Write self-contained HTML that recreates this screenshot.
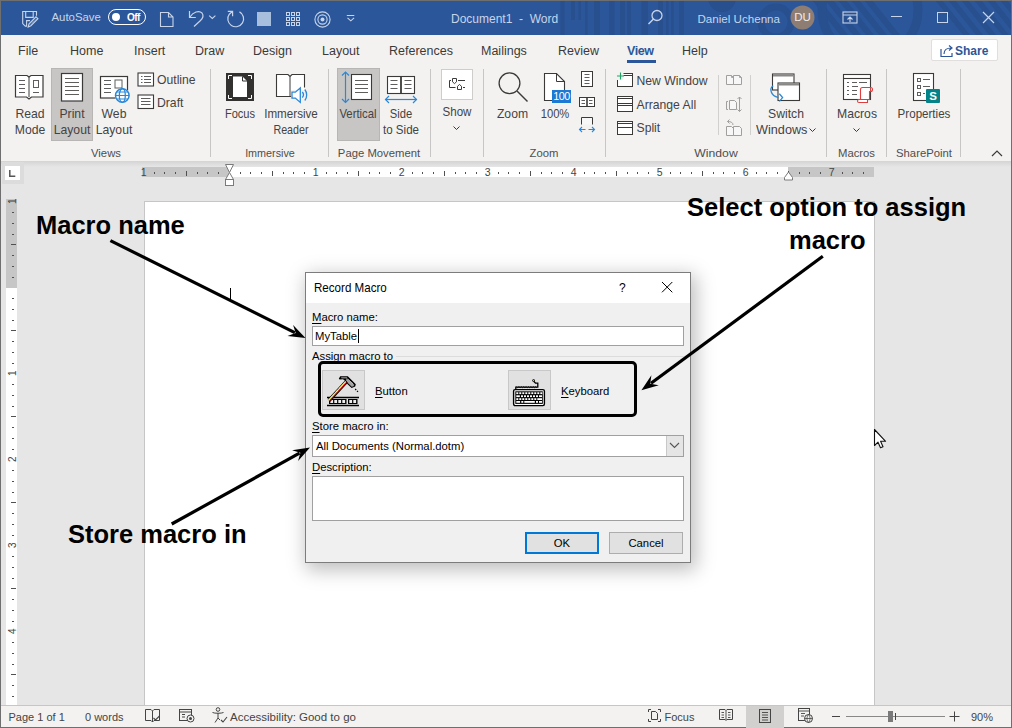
<!DOCTYPE html>
<html><head><meta charset="utf-8">
<style>
*{margin:0;padding:0;box-sizing:border-box}
html,body{width:1012px;height:728px;overflow:hidden}
body{position:relative;background:#e6e6e6;font-family:"Liberation Sans",sans-serif;color:#252423}
.a{position:absolute;overflow:visible}
.t{position:absolute;white-space:nowrap;line-height:1}
</style></head><body>
<div class="a" style="left:0px;top:0px;width:1012px;height:35px;background:#2b579a"></div>
<div class="a" style="left:0px;top:35px;width:1012px;height:126px;background:#f3f2f1"></div>
<div class="a" style="left:0px;top:161px;width:1012px;height:6px;background:linear-gradient(#d4d4d4,#e6e6e6)"></div>
<div class="a" style="left:144px;top:201px;width:731px;height:520px;background:#fff;border:1px solid #c6c6c6"></div>
<div class="a" style="left:0px;top:705px;width:1012px;height:23px;background:#f3f2f1;border-top:1px solid #c8c6c4"></div>
<svg class="a" style="left:540px;top:0px;overflow:hidden" width="472" height="35" viewBox="0 0 472 35"><g fill="#284f8e"><rect x="20.5" y="0" width="4" height="35"/><rect x="31" y="0" width="4" height="20"/><rect x="38.5" y="0" width="2.5" height="20"/><rect x="45" y="0" width="2.5" height="35"/><rect x="54" y="0" width="6" height="35"/><rect x="69" y="0" width="5.5" height="35"/><rect x="80" y="0" width="5" height="35"/><rect x="87" y="0" width="4" height="35"/><rect x="101.5" y="0" width="6.5" height="35"/><rect x="118" y="0" width="5" height="35"/><rect x="126" y="0" width="2.5" height="35"/><rect x="131" y="0" width="2.7" height="35"/><rect x="139" y="0" width="5" height="35"/><circle cx="182" cy="-2" r="14"/><circle cx="236" cy="22" r="15" fill="none" stroke="#284f8e" stroke-width="7"/><path d="M272 0h8l28 35h-8z"/><path d="M285 0h8l28 35h-8z"/><path d="M298 0h8l28 35h-8z"/><path d="M311 0h8l28 35h-8z"/><path d="M324 0h8l28 35h-8z"/><circle cx="330" cy="10" r="48" fill="none" stroke="#284f8e" stroke-width="9"/><path d="M395 0h7l28 35h-7z"/><path d="M408 0h7l28 35h-7z"/><path d="M421 0h7l28 35h-7z"/><path d="M434 0h7l28 35h-7z"/><path d="M447 0h7l28 35h-7z"/><path d="M460 0h7l28 35h-7z"/></g></svg>
<svg class="a" style="left:18px;top:6px;" width="24" height="24" viewBox="0 0 24 24"><path d="M18.5 9.8V5.5H4.7V17.6L7.3 20.1H8.6V14.6H12" fill="none" stroke="#c7d4ea" stroke-width="1.1"/>
<path d="M7.7 5.5V11.4H15.2V5.5" fill="none" stroke="#c7d4ea" stroke-width="1.1"/>
<path d="M10.2 21L11 17.8L18 10.8L19.9 12.7L12.9 19.7Z" fill="none" stroke="#c7d4ea" stroke-width="1.1"/>
<path d="M12.3 18.3L17.8 12.8" stroke="#c7d4ea" stroke-width="0.9" stroke-dasharray="1 0.8"/></svg>
<div class="t" style="left:51.5px;top:12.35px;font-size:11.4px;color:#c7d4ea;font-weight:normal;">AutoSave</div>
<div class="a" style="left:108px;top:9px;width:38px;height:16px;border:1.3px solid #fff;border-radius:8px"></div>
<svg class="a" style="left:111px;top:12px;" width="10" height="10" viewBox="0 0 10 10"><circle cx="5" cy="5" r="4" fill="#fff"/></svg>
<div class="t" style="left:127px;top:12.54px;font-size:10px;color:#fff;font-weight:bold;letter-spacing:-0.5px">Off</div>
<svg class="a" style="left:159px;top:11px;" width="16" height="17" viewBox="0 0 16 17"><path d="M1.5 1.5h8l4.5 4.5v9.5h-12.5z M9.5 1.5v4.5h4.5" fill="none" stroke="#c7d4ea" stroke-width="1.1"/></svg>
<svg class="a" style="left:180px;top:5px;" width="70" height="27" viewBox="0 0 70 27"><path d="M9.5 6V12.5H15.8M10 12C13 7 19 5 22 8C23.5 10 23 13 20.5 15.5L14 21.5" fill="none" stroke="#c7d4ea" stroke-width="1.2"/>
<path d="M29.2 10.6l3.1 2.8 3.1-2.8" fill="none" stroke="#c7d4ea" stroke-width="1.1"/>
<path d="M59.5 6.9A7.9 7.9 0 1 1 49.3 9.2L52.6 6.3M47.8 6.3H52.6V11.3" fill="none" stroke="#c7d4ea" stroke-width="1.2"/></svg>
<div class="a" style="left:257px;top:12px;width:14px;height:14px;background:#a8bedd"></div>
<svg class="a" style="left:286px;top:12px;" width="15" height="15" viewBox="0 0 15 15"><rect x="0.5" y="0.5" width="3" height="3" fill="none" stroke="#c7d4ea" stroke-width="1"/><rect x="0.5" y="5.5" width="3" height="3" fill="none" stroke="#c7d4ea" stroke-width="1"/><rect x="0.5" y="10.5" width="3" height="3" fill="none" stroke="#c7d4ea" stroke-width="1"/><rect x="5.5" y="0.5" width="3" height="3" fill="none" stroke="#c7d4ea" stroke-width="1"/><rect x="5.5" y="5.5" width="3" height="3" fill="none" stroke="#c7d4ea" stroke-width="1"/><rect x="5.5" y="10.5" width="3" height="3" fill="none" stroke="#c7d4ea" stroke-width="1"/><rect x="10.5" y="0.5" width="3" height="3" fill="none" stroke="#c7d4ea" stroke-width="1"/><rect x="10.5" y="5.5" width="3" height="3" fill="none" stroke="#c7d4ea" stroke-width="1"/><rect x="10.5" y="10.5" width="3" height="3" fill="none" stroke="#c7d4ea" stroke-width="1"/></svg>
<svg class="a" style="left:312.5px;top:9.5px;" width="19" height="19" viewBox="0 0 19 19"><circle cx="9.5" cy="9.5" r="7.6" fill="none" stroke="#c7d4ea" stroke-width="1.1"/><circle cx="9.5" cy="9.5" r="4.6" fill="none" stroke="#c7d4ea" stroke-width="1.1"/><circle cx="9.5" cy="9.5" r="2" fill="#c7d4ea"/></svg>
<svg class="a" style="left:345px;top:12px;" width="12" height="10" viewBox="0 0 12 10"><path d="M1.8 3.5H9.3" stroke="#c7d4ea" stroke-width="1"/><path d="M2.5 5.8l3.3 3 3.3-3" fill="none" stroke="#c7d4ea" stroke-width="1.1"/></svg>
<div class="t" style="left:451px;top:12.84px;font-size:12px;color:#c7d4ea;font-weight:normal;">Document1&nbsp;&nbsp;-&nbsp;&nbsp;Word</div>
<svg class="a" style="left:647px;top:9px;" width="17" height="17" viewBox="0 0 17 17"><circle cx="10" cy="6.5" r="5" fill="none" stroke="#c7d4ea" stroke-width="1.3"/><path d="M6.5 10l-5 5" stroke="#c7d4ea" stroke-width="1.5"/></svg>
<div class="t" style="left:697.5px;top:13.18px;font-size:11.6px;color:#c7d4ea;font-weight:normal;">Daniel Uchenna</div>
<svg class="a" style="left:790px;top:5px;" width="25" height="25" viewBox="0 0 25 25"><circle cx="12.5" cy="12.5" r="12" fill="#8e7d72"/></svg>
<div class="t" style="left:652.5px;width:300px;text-align:center;top:11.77px;font-size:11.5px;color:#f0ece8;font-weight:normal;">DU</div>
<svg class="a" style="left:842px;top:11px;" width="16" height="13" viewBox="0 0 16 13"><rect x="1" y="1" width="14" height="11" fill="none" stroke="#c7d4ea" stroke-width="1.1"/><path d="M1 4h14" stroke="#c7d4ea" stroke-width="1"/><path d="M8 11V6M5.5 8.5L8 6l2.5 2.5" fill="none" stroke="#c7d4ea" stroke-width="1.1"/></svg>
<div class="a" style="left:891px;top:16px;width:11px;height:1px;background:#c7d4ea"></div>
<div class="a" style="left:937px;top:12px;width:11px;height:11px;border:1.1px solid #c7d4ea"></div>
<svg class="a" style="left:982px;top:11px;" width="13" height="13" viewBox="0 0 13 13"><path d="M1 1l11 11M12 1L1 12" stroke="#c7d4ea" stroke-width="1.2"/></svg>
<div class="t" style="left:18px;top:45.42px;font-size:12.5px;color:#3b3a39;font-weight:normal;">File</div>
<div class="t" style="left:70px;top:45.42px;font-size:12.5px;color:#3b3a39;font-weight:normal;">Home</div>
<div class="t" style="left:134px;top:45.42px;font-size:12.5px;color:#3b3a39;font-weight:normal;">Insert</div>
<div class="t" style="left:195px;top:45.42px;font-size:12.5px;color:#3b3a39;font-weight:normal;">Draw</div>
<div class="t" style="left:253px;top:45.42px;font-size:12.5px;color:#3b3a39;font-weight:normal;">Design</div>
<div class="t" style="left:322px;top:45.42px;font-size:12.5px;color:#3b3a39;font-weight:normal;">Layout</div>
<div class="t" style="left:389px;top:45.42px;font-size:12.5px;color:#3b3a39;font-weight:normal;">References</div>
<div class="t" style="left:481px;top:45.42px;font-size:12.5px;color:#3b3a39;font-weight:normal;">Mailings</div>
<div class="t" style="left:558px;top:45.42px;font-size:12.5px;color:#3b3a39;font-weight:normal;">Review</div>
<div class="t" style="left:682px;top:45.42px;font-size:12.5px;color:#3b3a39;font-weight:normal;">Help</div>
<div class="t" style="left:627px;top:45.42px;font-size:12.5px;color:#2b579a;font-weight:bold;letter-spacing:-0.4px">View</div>
<div class="a" style="left:627px;top:60px;width:29px;height:3px;background:#2b579a"></div>
<div class="a" style="left:931px;top:39px;width:67px;height:22px;background:#fff;border:1px solid #e1dfdd;border-radius:2px"></div>
<svg class="a" style="left:939px;top:43px;" width="16" height="15" viewBox="0 0 16 15"><path d="M2 6v7.5h11V10" fill="none" stroke="#2b579a" stroke-width="1.2"/><path d="M5 11c0-4 3-6 7-6M10 2.5l3 2.5-3 2.5" fill="none" stroke="#2b579a" stroke-width="1.2"/></svg>
<div class="t" style="left:955px;top:45.34px;font-size:12px;color:#2b579a;font-weight:bold;">Share</div>
<div class="a" style="left:0px;top:0px;width:1012px;height:1px;background:#6f6f6f"></div>
<div class="a" style="left:0px;top:0px;width:1px;height:728px;background:#6f6f6f"></div>
<div class="a" style="left:1011px;top:0px;width:1px;height:728px;background:#6f6f6f"></div>
<div class="a" style="left:0px;top:727px;width:1012px;height:1px;background:#6f6f6f"></div>
<div class="a" style="left:51px;top:68px;width:42px;height:73px;background:#c8c6c4;border:1px solid #b8b6b4"></div>
<div class="a" style="left:337px;top:68px;width:43px;height:73px;background:#c8c6c4;border:1px solid #b8b6b4"></div>
<div class="a" style="left:210px;top:69px;width:1px;height:88px;background:#c8c6c4"></div>
<div class="a" style="left:328px;top:69px;width:1px;height:88px;background:#c8c6c4"></div>
<div class="a" style="left:430px;top:69px;width:1px;height:88px;background:#c8c6c4"></div>
<div class="a" style="left:483px;top:69px;width:1px;height:88px;background:#c8c6c4"></div>
<div class="a" style="left:605px;top:69px;width:1px;height:88px;background:#c8c6c4"></div>
<div class="a" style="left:826px;top:69px;width:1px;height:88px;background:#c8c6c4"></div>
<div class="a" style="left:886px;top:69px;width:1px;height:88px;background:#c8c6c4"></div>
<div class="a" style="left:960px;top:69px;width:1px;height:88px;background:#c8c6c4"></div>
<div class="a" style="left:718px;top:75px;width:1px;height:60px;background:#d2d0ce"></div>
<div class="a" style="left:750px;top:75px;width:1px;height:60px;background:#d2d0ce"></div>
<svg class="a" style="left:14px;top:74px;" width="32" height="27" viewBox="0 0 32 27"><path d="M1.5 1.5h11.5l2 1.5 2-1.5h12v21.5h-11.5l-2.5 2-2.5-2h-11z" fill="#fff" stroke="#3b3a39" stroke-width="1.2"/>
<path d="M15 3v20" stroke="#3b3a39" stroke-width="1"/>
<path d="M5 6.5h6M5 10.5h6M5 14.5h6M5 18.5h6M19 18.5h6" stroke="#5f5e5d" stroke-width="1"/>
<rect x="19.5" y="6.5" width="5" height="7" fill="none" stroke="#5f5e5d" stroke-width="1"/></svg>
<div class="t" style="left:-120px;width:300px;text-align:center;top:107.67px;font-size:12.2px;color:#444342;font-weight:normal;">Read</div>
<div class="t" style="left:-120px;width:300px;text-align:center;top:123.67px;font-size:12.2px;color:#444342;font-weight:normal;">Mode</div>
<svg class="a" style="left:60px;top:72px;" width="24" height="30" viewBox="0 0 24 30"><rect x="1.5" y="1.5" width="21" height="27.5" fill="#fff" stroke="#3b3a39" stroke-width="1.2"/>
<path d="M5 6.5h14M5 10.5h14M5 14.5h14M5 18.5h14M5 22.5h14" stroke="#5f5e5d" stroke-width="1"/></svg>
<div class="t" style="left:-78px;width:300px;text-align:center;top:107.67px;font-size:12.2px;color:#444342;font-weight:normal;">Print</div>
<div class="t" style="left:-78px;width:300px;text-align:center;top:123.67px;font-size:12.2px;color:#444342;font-weight:normal;">Layout</div>
<svg class="a" style="left:99px;top:75px;" width="33" height="30" viewBox="0 0 33 30"><rect x="1.5" y="1.5" width="27" height="21.5" fill="#fff" stroke="#3b3a39" stroke-width="1.2"/>
<path d="M5 5.5h7M5 9.5h7M5 13.5h7M5 17.5h7" stroke="#5f5e5d" stroke-width="1"/>
<rect x="16" y="5" width="7" height="8" fill="none" stroke="#5f5e5d" stroke-width="1"/>
<circle cx="23.3" cy="20.5" r="7.5" fill="#fff"/>
<circle cx="23.3" cy="20.5" r="6.8" fill="none" stroke="#2b88d8" stroke-width="1.5"/>
<ellipse cx="23.3" cy="20.5" rx="3" ry="6.8" fill="none" stroke="#2b88d8" stroke-width="1.3"/>
<path d="M16.5 20.5h13.6M17.5 17h11.6M17.5 24h11.6" stroke="#2b88d8" stroke-width="1.2"/></svg>
<div class="t" style="left:-36px;width:300px;text-align:center;top:107.67px;font-size:12.2px;color:#444342;font-weight:normal;">Web</div>
<div class="t" style="left:-36px;width:300px;text-align:center;top:123.67px;font-size:12.2px;color:#444342;font-weight:normal;">Layout</div>
<svg class="a" style="left:137px;top:72px;" width="18" height="15" viewBox="0 0 18 15"><rect x="1" y="1" width="15.5" height="13" fill="#fff" stroke="#3b3a39" stroke-width="1.1"/>
<path d="M4 4.5h1.5M4 7.5h1.5M4 10.5h1.5M7 4.5h7M7 7.5h7M7 10.5h7" stroke="#5f5e5d" stroke-width="1"/></svg>
<div class="t" style="left:157px;top:74.17px;font-size:12.2px;color:#444342;font-weight:normal;">Outline</div>
<svg class="a" style="left:137px;top:94px;" width="18" height="16" viewBox="0 0 18 16"><rect x="1" y="1" width="15.5" height="13.5" fill="#fff" stroke="#3b3a39" stroke-width="1.1"/>
<path d="M4 4.5h9.5M4 7.5h9.5M4 10.5h9.5" stroke="#5f5e5d" stroke-width="1"/></svg>
<div class="t" style="left:157px;top:96.67px;font-size:12.2px;color:#444342;font-weight:normal;">Draft</div>
<div class="t" style="left:-44px;width:300px;text-align:center;top:147.93px;font-size:11.3px;color:#4f4e4d;font-weight:normal;">Views</div>
<svg class="a" style="left:225px;top:72px;" width="31" height="30" viewBox="0 0 31 30"><rect x="1" y="1" width="28" height="28" fill="#323130"/>
<path d="M8 4.5h9.5l4.5 4.5v16h-14z" fill="#fff"/>
<path d="M17.5 4.5v4.5h4.5" fill="none" stroke="#323130" stroke-width="1"/>
<path d="M3.5 7v-3.5h3.5M23 3.5h3.5v3.5M26.5 23v3.5h-3.5M7 26.5h-3.5v-3.5" fill="none" stroke="#fff" stroke-width="1"/></svg>
<div class="t" style="left:89.5px;width:300px;text-align:center;top:107.67px;font-size:12.2px;color:#444342;font-weight:normal;transform:scaleX(0.91);transform-origin:center top;">Focus</div>
<svg class="a" style="left:275px;top:72px;" width="34" height="32" viewBox="0 0 34 32"><path d="M1.5 2.5H13L15 4.5L17 2.5H29.5V18H16V24.5H1.5Z" fill="#fff"/>
<path d="M16 24.5H1.5V2.5H13L15 4.5L17 2.5H29.5V15.5" fill="none" stroke="#3b3a39" stroke-width="1.1"/>
<path d="M15 4.5V24" stroke="#3b3a39" stroke-width="1"/>
<path d="M17 20.2h3.3l5-4.3v14.5l-5-4.3h-3.3z" fill="#fff" stroke="#2b88d8" stroke-width="1.3"/>
<path d="M27.3 20c1.3 1.5 1.3 4 0 5.5M29.8 17.5c2.5 3 2.5 8 0 11" fill="none" stroke="#2b88d8" stroke-width="1.3"/></svg>
<div class="t" style="left:140.7px;width:300px;text-align:center;top:107.67px;font-size:12.2px;color:#444342;font-weight:normal;transform:scaleX(0.955);transform-origin:center top;">Immersive</div>
<div class="t" style="left:141px;width:300px;text-align:center;top:123.67px;font-size:12.2px;color:#444342;font-weight:normal;transform:scaleX(0.88);transform-origin:center top;">Reader</div>
<div class="t" style="left:120.19999999999999px;width:300px;text-align:center;top:147.93px;font-size:11.3px;color:#4f4e4d;font-weight:normal;transform:scaleX(0.955);transform-origin:center top;">Immersive</div>
<svg class="a" style="left:340px;top:71px;" width="34" height="33" viewBox="0 0 34 33"><rect x="11.5" y="3.5" width="20" height="25" fill="#fff" stroke="#3b3a39" stroke-width="1.1"/>
<path d="M15 9.5h13M15 13.5h13M15 17.5h13M15 21.5h13" stroke="#5f5e5d" stroke-width="1"/>
<path d="M5.5 1v30.5" stroke="#2b88d8" stroke-width="1.2"/><path d="M2 4.5l3.5-3.5 3.5 3.5M2 28l3.5 3.5 3.5-3.5" fill="none" stroke="#2b88d8" stroke-width="1.2"/></svg>
<div class="t" style="left:208px;width:300px;text-align:center;top:107.67px;font-size:12.2px;color:#444342;font-weight:normal;transform:scaleX(0.93);transform-origin:center top;">Vertical</div>
<svg class="a" style="left:384px;top:73px;" width="36" height="32" viewBox="0 0 36 32"><rect x="3.5" y="3.5" width="27" height="17" fill="#fff" stroke="#3b3a39" stroke-width="1.1"/>
<path d="M17 3.5V20.5" stroke="#3b3a39" stroke-width="1.8"/>
<path d="M6.5 7.5h7M6.5 11.5h7M6.5 15.5h7M20.5 7.5h7M20.5 11.5h7M20.5 15.5h7" stroke="#5f5e5d" stroke-width="1"/>
<path d="M1.5 26.5h31" stroke="#2b88d8" stroke-width="1.2"/><path d="M5 23l-3.5 3.5 3.5 3.5M29 23l3.5 3.5-3.5 3.5" fill="none" stroke="#2b88d8" stroke-width="1.2"/></svg>
<div class="t" style="left:251px;width:300px;text-align:center;top:107.67px;font-size:12.2px;color:#444342;font-weight:normal;transform:scaleX(0.92);transform-origin:center top;">Side</div>
<div class="t" style="left:251px;width:300px;text-align:center;top:123.67px;font-size:12.2px;color:#444342;font-weight:normal;transform:scaleX(0.95);transform-origin:center top;">to Side</div>
<div class="t" style="left:229px;width:300px;text-align:center;top:147.93px;font-size:11.3px;color:#4f4e4d;font-weight:normal;">Page Movement</div>
<div class="a" style="left:441px;top:69px;width:32px;height:31px;background:#fff;border:1px solid #cfcdcb"></div>
<svg class="a" style="left:441px;top:69px;" width="32" height="31" viewBox="0 0 32 31"><path d="M10 11.5H8.5V18.5H14.5" fill="none" stroke="#3b3a39" stroke-width="1"/>
<path d="M11.5 9.5H15.5V12.8L13.5 14.6L11.5 12.8Z" fill="none" stroke="#3b3a39" stroke-width="1"/>
<path d="M17 11.5H24M22 18.5H24" stroke="#3b3a39" stroke-width="1"/>
<path d="M16.5 20.5V17.3L18.5 15.5L20.5 17.3V20.5Z" fill="none" stroke="#3b3a39" stroke-width="1"/></svg>
<div class="t" style="left:306.5px;width:300px;text-align:center;top:106.17px;font-size:12.2px;color:#444342;font-weight:normal;transform:scaleX(0.95);transform-origin:center top;">Show</div>
<svg class="a" style="left:452px;top:124.5px;" width="10" height="7" viewBox="0 0 10 7"><path d="M1.5 1.5l3 3 3-3" fill="none" stroke="#3b3a39" stroke-width="1"/></svg>
<svg class="a" style="left:496px;top:72px;" width="34" height="32" viewBox="0 0 34 32"><circle cx="13.5" cy="11.3" r="10.4" fill="none" stroke="#3b3a39" stroke-width="1.3"/>
<path d="M21 19l10.5 10.5" stroke="#3b3a39" stroke-width="1.4"/></svg>
<div class="t" style="left:362.5px;width:300px;text-align:center;top:107.67px;font-size:12.2px;color:#444342;font-weight:normal;">Zoom</div>
<svg class="a" style="left:542px;top:72px;" width="32" height="32" viewBox="0 0 32 32"><path d="M2.5 1.5H14.5L22.5 9.5V28.5H2.5Z" fill="#fff" stroke="#3b3a39" stroke-width="1.1"/>
<path d="M14.5 1.5V9.5H22.5" fill="none" stroke="#3b3a39" stroke-width="1"/>
<rect x="10" y="18" width="19" height="13" fill="#1c7ad4"/></svg>
<div class="t" style="left:553.3px;top:91.46px;font-size:10.8px;color:#fff;font-weight:normal;letter-spacing:-0.5px">100</div>
<div class="t" style="left:405.29999999999995px;width:300px;text-align:center;top:107.67px;font-size:12.2px;color:#444342;font-weight:normal;transform:scaleX(0.92);transform-origin:center top;">100%</div>
<svg class="a" style="left:579px;top:70px;" width="16" height="18" viewBox="0 0 16 18"><rect x="2.5" y="1.5" width="11" height="15" fill="#fff" stroke="#3b3a39" stroke-width="1"/>
<path d="M5.5 4.5h5M5.5 7.5h5M5.5 10.5h5M5.5 13.5h5" stroke="#5f5e5d" stroke-width="1"/></svg>
<svg class="a" style="left:578px;top:95px;" width="18" height="13" viewBox="0 0 18 13"><rect x="1.5" y="2.5" width="15" height="9" fill="#fff" stroke="#3b3a39" stroke-width="1"/>
<path d="M9 2.5V11.5" stroke="#3b3a39" stroke-width="1.6"/>
<path d="M3.5 5.5h3.5M3.5 8.5h3.5M11 5.5h3.5M11 8.5h3.5" stroke="#5f5e5d" stroke-width="1"/></svg>
<svg class="a" style="left:578px;top:115px;" width="18" height="19" viewBox="0 0 18 19"><path d="M3.5 9.5V2.5H14.5V9.5" fill="#f7f7f7" stroke="#3b3a39" stroke-width="1"/>
<path d="M1.5 14.5H7.5M4 12L1.5 14.5L4 17M10.5 14.5H16.5M14 12L16.5 14.5L14 17" fill="none" stroke="#2b88d8" stroke-width="1.1"/></svg>
<div class="t" style="left:394px;width:300px;text-align:center;top:147.93px;font-size:11.3px;color:#4f4e4d;font-weight:normal;">Zoom</div>
<svg class="a" style="left:615px;top:72px;" width="20" height="16" viewBox="0 0 20 16"><rect x="2.5" y="1.5" width="15" height="13" fill="#fff" stroke="#3b3a39" stroke-width="1"/>
<path d="M2.5 3.5h15" stroke="#3b3a39" stroke-width="1"/>
<rect x="0" y="0" width="8.5" height="8" fill="#f3f2f1"/>
<path d="M5.5 0.5v7M2 4h7" stroke="#21a366" stroke-width="1.1"/></svg>
<div class="t" style="left:636.5px;top:74.67px;font-size:12.2px;color:#444342;font-weight:normal;">New Window</div>
<svg class="a" style="left:616px;top:95px;" width="18" height="18" viewBox="0 0 18 18"><rect x="1.5" y="1.5" width="15" height="15" fill="#fff" stroke="#3b3a39" stroke-width="1"/>
<path d="M1.5 3.5h15M1.5 8.5h15M1.5 10.5h15" stroke="#3b3a39" stroke-width="1"/></svg>
<div class="t" style="left:636.5px;top:98.67px;font-size:12.2px;color:#444342;font-weight:normal;">Arrange All</div>
<svg class="a" style="left:616px;top:119px;" width="18" height="17" viewBox="0 0 18 17"><rect x="1.5" y="2.5" width="15" height="13" fill="#fff" stroke="#3b3a39" stroke-width="1"/>
<path d="M1.5 4.5h15M1.5 8.5h15" stroke="#3b3a39" stroke-width="1"/></svg>
<div class="t" style="left:636.5px;top:122.37px;font-size:12.2px;color:#444342;font-weight:normal;">Split</div>
<svg class="a" style="left:724px;top:73px;" width="20" height="14" viewBox="0 0 20 14"><path d="M2.5 11.5V2.5H7.5L9.5 4.5V11.5Z M9.5 11.5V2.5H15.5L17.5 4.5V11.5Z" fill="#f7f7f7" stroke="#a19f9d" stroke-width="1"/><path d="M7.5 2.5V4.5H9.5M15.5 2.5V4.5H17.5" fill="none" stroke="#a19f9d" stroke-width="0.9"/></svg>
<svg class="a" style="left:724px;top:95px;" width="20" height="18" viewBox="0 0 20 18"><path d="M4 6.5H2.5V14.5H4" fill="none" stroke="#a19f9d" stroke-width="1"/><path d="M5.5 14.5V5.5H10.5L12.5 7.5V14.5Z" fill="#f7f7f7" stroke="#a19f9d" stroke-width="1"/><path d="M15.5 2V16.5M13.5 4L15.5 2L17.5 4M13.5 14.5L15.5 16.5L17.5 14.5" fill="none" stroke="#a19f9d" stroke-width="1"/></svg>
<svg class="a" style="left:724px;top:118px;" width="20" height="19" viewBox="0 0 20 19"><path d="M2.5 17.5V8.5H7.5L9.5 10.5V17.5Z M9.5 17.5V8.5H15.5L17.5 10.5V17.5Z" fill="#f7f7f7" stroke="#a19f9d" stroke-width="1"/><path d="M9 7C9 4.5 7 3.5 3.5 3.5M5.5 1.5L3.5 3.5L5.5 5.5" fill="none" stroke="#a19f9d" stroke-width="1"/></svg>
<svg class="a" style="left:768px;top:72px;" width="36" height="33" viewBox="0 0 36 33"><rect x="4.5" y="2" width="21.5" height="16" fill="#fff" stroke="#3b3a39" stroke-width="1.1"/>
<rect x="5" y="2.5" width="20.5" height="2" fill="#8a8886"/>
<rect x="10" y="11" width="21.5" height="17.5" fill="#fff" stroke="#3b3a39" stroke-width="1.1"/>
<rect x="10.5" y="11.5" width="20.5" height="2" fill="#8a8886"/>
<path d="M5.2 13.8C1.5 16 1.8 23.5 10.5 25.6" fill="none" stroke="#2b88d8" stroke-width="1.3"/><path d="M11.3 21.8l3.3 3.8-3.3 3.8" fill="none" stroke="#2b88d8" stroke-width="1.3"/></svg>
<div class="t" style="left:636px;width:300px;text-align:center;top:107.67px;font-size:12.2px;color:#444342;font-weight:normal;">Switch</div>
<div class="t" style="left:756px;top:123.67px;font-size:12.2px;color:#444342;font-weight:normal;transform:scaleX(1.04);transform-origin:left top;">Windows</div>
<svg class="a" style="left:808px;top:127px;" width="9" height="6" viewBox="0 0 9 6"><path d="M1.5 1.5l3 3 3-3" fill="none" stroke="#3b3a39" stroke-width="1"/></svg>
<div class="t" style="left:566px;width:300px;text-align:center;top:147.93px;font-size:11.3px;color:#4f4e4d;font-weight:normal;transform:scaleX(1.08);transform-origin:center top;">Window</div>
<svg class="a" style="left:842px;top:72px;" width="33" height="33" viewBox="0 0 33 33"><rect x="1.5" y="2.5" width="27" height="25" fill="#fff" stroke="#3b3a39" stroke-width="1.1"/>
<path d="M1.5 6.5h27" stroke="#3b3a39" stroke-width="1.1"/>
<path d="M5 10.5h2M10 10.5h5M17 10.5h8M5 14.5h2M10 14.5h6M5 18.5h2M10 18.5h5M5 22.5h2M10 22.5h5" stroke="#5f5e5d" stroke-width="1"/>
<path d="M18.5 27.5V17.5Q18.5 15.5 20.5 15.5H28.5Q30.5 15.5 30.5 17.5Q30.5 19.5 28.5 19.5H27.5V27.5Z" fill="#fff" stroke="#e03e3e" stroke-width="1.1"/>
<path d="M28.5 15.5V19.5" stroke="#e03e3e" stroke-width="1"/>
<path d="M15.5 29Q15.5 27.5 17 27.5H25.5V30.5H17Q15.5 30.5 15.5 29Z" fill="#fff" stroke="#e03e3e" stroke-width="1.1"/></svg>
<div class="t" style="left:707px;width:300px;text-align:center;top:107.67px;font-size:12.2px;color:#444342;font-weight:normal;">Macros</div>
<svg class="a" style="left:852px;top:126.5px;" width="10" height="7" viewBox="0 0 10 7"><path d="M1.5 1.5l3 3 3-3" fill="none" stroke="#3b3a39" stroke-width="1"/></svg>
<div class="t" style="left:706.5px;width:300px;text-align:center;top:147.93px;font-size:11.3px;color:#4f4e4d;font-weight:normal;">Macros</div>
<svg class="a" style="left:911px;top:72px;" width="32" height="32" viewBox="0 0 32 32"><rect x="2.5" y="1.5" width="20" height="27" fill="#fff" stroke="#3b3a39" stroke-width="1.1"/>
<rect x="6.5" y="6.5" width="3" height="3" fill="none" stroke="#5f5e5d" stroke-width="1"/><path d="M12 7.5h7" stroke="#5f5e5d" stroke-width="1"/>
<rect x="6.5" y="13.5" width="3" height="3" fill="none" stroke="#5f5e5d" stroke-width="1"/><path d="M12 14.5h7" stroke="#5f5e5d" stroke-width="1"/>
<rect x="6.5" y="20.5" width="3" height="3" fill="none" stroke="#5f5e5d" stroke-width="1"/><path d="M12 21.5h2" stroke="#5f5e5d" stroke-width="1"/>
<rect x="15" y="17" width="14" height="14" rx="1" fill="#038387"/>
<text x="22" y="28.2" font-family="Liberation Sans" font-weight="bold" font-size="11.5" fill="#fff" text-anchor="middle">S</text></svg>
<div class="t" style="left:773.5px;width:300px;text-align:center;top:107.67px;font-size:12.2px;color:#444342;font-weight:normal;transform:scaleX(0.95);transform-origin:center top;">Properties</div>
<div class="t" style="left:774px;width:300px;text-align:center;top:147.93px;font-size:11.3px;color:#4f4e4d;font-weight:normal;">SharePoint</div>
<svg class="a" style="left:990px;top:149px;" width="14" height="9" viewBox="0 0 14 9"><path d="M2 7l5-5 5 5" fill="none" stroke="#3b3a39" stroke-width="1.2"/></svg>
<div class="a" style="left:2px;top:162px;width:22px;height:22px;background:#dcdcdc"></div>
<div class="a" style="left:5px;top:166px;width:15px;height:14px;background:#fff"></div>
<svg class="a" style="left:8px;top:169px;" width="9" height="9" viewBox="0 0 9 9"><path d="M1.8 1v6.3h5.5" fill="none" stroke="#555" stroke-width="1.5"/></svg>
<div class="a" style="left:142px;top:167px;width:88px;height:10px;background:#c6c6c6"></div>
<div class="a" style="left:230px;top:167px;width:558px;height:10px;background:#fff"></div>
<div class="a" style="left:788px;top:167px;width:86px;height:10px;background:#c6c6c6"></div>
<svg class="a" style="left:142px;top:167px;" width="732" height="10" viewBox="0 0 732 10"><text x="1.7" y="9.3" font-family="Liberation Sans" font-size="10.5" fill="#444" text-anchor="middle">1</text><rect x="12.0" y="5" width="1" height="2" fill="#505050"/><rect x="22.0" y="5" width="1" height="2" fill="#505050"/><rect x="33.0" y="5" width="1" height="2" fill="#505050"/><rect x="44.0" y="4" width="1" height="5" fill="#505050"/><rect x="55.0" y="5" width="1" height="2" fill="#505050"/><rect x="65.0" y="5" width="1" height="2" fill="#505050"/><rect x="76.0" y="5" width="1" height="2" fill="#505050"/><rect x="98.0" y="5" width="1" height="2" fill="#505050"/><rect x="108.0" y="5" width="1" height="2" fill="#505050"/><rect x="119.0" y="5" width="1" height="2" fill="#505050"/><rect x="130.0" y="4" width="1" height="5" fill="#505050"/><rect x="141.0" y="5" width="1" height="2" fill="#505050"/><rect x="151.0" y="5" width="1" height="2" fill="#505050"/><rect x="162.0" y="5" width="1" height="2" fill="#505050"/><text x="173.7" y="9.3" font-family="Liberation Sans" font-size="10.5" fill="#444" text-anchor="middle">1</text><rect x="184.0" y="5" width="1" height="2" fill="#505050"/><rect x="194.0" y="5" width="1" height="2" fill="#505050"/><rect x="205.0" y="5" width="1" height="2" fill="#505050"/><rect x="216.0" y="4" width="1" height="5" fill="#505050"/><rect x="227.0" y="5" width="1" height="2" fill="#505050"/><rect x="237.0" y="5" width="1" height="2" fill="#505050"/><rect x="248.0" y="5" width="1" height="2" fill="#505050"/><text x="259.7" y="9.3" font-family="Liberation Sans" font-size="10.5" fill="#444" text-anchor="middle">2</text><rect x="270.0" y="5" width="1" height="2" fill="#505050"/><rect x="280.0" y="5" width="1" height="2" fill="#505050"/><rect x="291.0" y="5" width="1" height="2" fill="#505050"/><rect x="302.0" y="4" width="1" height="5" fill="#505050"/><rect x="313.0" y="5" width="1" height="2" fill="#505050"/><rect x="323.0" y="5" width="1" height="2" fill="#505050"/><rect x="334.0" y="5" width="1" height="2" fill="#505050"/><text x="345.7" y="9.3" font-family="Liberation Sans" font-size="10.5" fill="#444" text-anchor="middle">3</text><rect x="356.0" y="5" width="1" height="2" fill="#505050"/><rect x="366.0" y="5" width="1" height="2" fill="#505050"/><rect x="377.0" y="5" width="1" height="2" fill="#505050"/><rect x="388.0" y="4" width="1" height="5" fill="#505050"/><rect x="399.0" y="5" width="1" height="2" fill="#505050"/><rect x="409.0" y="5" width="1" height="2" fill="#505050"/><rect x="420.0" y="5" width="1" height="2" fill="#505050"/><text x="431.7" y="9.3" font-family="Liberation Sans" font-size="10.5" fill="#444" text-anchor="middle">4</text><rect x="442.0" y="5" width="1" height="2" fill="#505050"/><rect x="452.0" y="5" width="1" height="2" fill="#505050"/><rect x="463.0" y="5" width="1" height="2" fill="#505050"/><rect x="474.0" y="4" width="1" height="5" fill="#505050"/><rect x="485.0" y="5" width="1" height="2" fill="#505050"/><rect x="495.0" y="5" width="1" height="2" fill="#505050"/><rect x="506.0" y="5" width="1" height="2" fill="#505050"/><text x="517.7" y="9.3" font-family="Liberation Sans" font-size="10.5" fill="#444" text-anchor="middle">5</text><rect x="528.0" y="5" width="1" height="2" fill="#505050"/><rect x="538.0" y="5" width="1" height="2" fill="#505050"/><rect x="549.0" y="5" width="1" height="2" fill="#505050"/><rect x="560.0" y="4" width="1" height="5" fill="#505050"/><rect x="571.0" y="5" width="1" height="2" fill="#505050"/><rect x="581.0" y="5" width="1" height="2" fill="#505050"/><rect x="592.0" y="5" width="1" height="2" fill="#505050"/><text x="603.7" y="9.3" font-family="Liberation Sans" font-size="10.5" fill="#444" text-anchor="middle">6</text><rect x="614.0" y="5" width="1" height="2" fill="#505050"/><rect x="624.0" y="5" width="1" height="2" fill="#505050"/><rect x="635.0" y="5" width="1" height="2" fill="#505050"/><rect x="646.0" y="4" width="1" height="5" fill="#505050"/><rect x="657.0" y="5" width="1" height="2" fill="#505050"/><rect x="667.0" y="5" width="1" height="2" fill="#505050"/><rect x="678.0" y="5" width="1" height="2" fill="#505050"/><text x="689.7" y="9.3" font-family="Liberation Sans" font-size="10.5" fill="#444" text-anchor="middle">7</text><rect x="700.0" y="5" width="1" height="2" fill="#505050"/><rect x="710.0" y="5" width="1" height="2" fill="#505050"/><rect x="721.0" y="5" width="1" height="2" fill="#505050"/></svg>
<svg class="a" style="left:224px;top:162px;" width="12" height="26" viewBox="0 0 12 26"><path d="M1.5 2.5h8L5.5 10.5z" fill="#fff" stroke="#7a7a7a" stroke-width="1"/><path d="M5.5 10.5L1.5 17.5h8z" fill="#fff" stroke="#7a7a7a" stroke-width="1"/><rect x="1.5" y="17.5" width="8" height="6" fill="#fff" stroke="#7a7a7a" stroke-width="1"/></svg>
<svg class="a" style="left:783px;top:170px;" width="12" height="12" viewBox="0 0 12 12"><path d="M5.5 2L1.5 7.5v2.5h8V7.5z" fill="#fff" stroke="#7a7a7a" stroke-width="1"/></svg>
<div class="a" style="left:6px;top:199px;width:11px;height:89px;background:#c6c6c6"></div>
<div class="a" style="left:6px;top:288px;width:11px;height:417px;background:#fff"></div>
<svg class="a" style="left:6px;top:199px;" width="11" height="506" viewBox="0 0 11 506"><text transform="translate(6.5 2.3) rotate(-90)" font-family="Liberation Sans" font-size="10" fill="#444" text-anchor="middle" y="3.5">1</text><rect x="6" y="13.0" width="2" height="1" fill="#505050"/><rect x="6" y="24.0" width="2" height="1" fill="#505050"/><rect x="6" y="35.0" width="2" height="1" fill="#505050"/><rect x="5" y="45.0" width="5" height="1" fill="#505050"/><rect x="6" y="56.0" width="2" height="1" fill="#505050"/><rect x="6" y="67.0" width="2" height="1" fill="#505050"/><rect x="6" y="78.0" width="2" height="1" fill="#505050"/><rect x="6" y="99.0" width="2" height="1" fill="#505050"/><rect x="6" y="110.0" width="2" height="1" fill="#505050"/><rect x="6" y="121.0" width="2" height="1" fill="#505050"/><rect x="5" y="131.0" width="5" height="1" fill="#505050"/><rect x="6" y="142.0" width="2" height="1" fill="#505050"/><rect x="6" y="153.0" width="2" height="1" fill="#505050"/><rect x="6" y="164.0" width="2" height="1" fill="#505050"/><text transform="translate(6.5 174.3) rotate(-90)" font-family="Liberation Sans" font-size="10" fill="#444" text-anchor="middle" y="3.5">1</text><rect x="6" y="185.0" width="2" height="1" fill="#505050"/><rect x="6" y="196.0" width="2" height="1" fill="#505050"/><rect x="6" y="207.0" width="2" height="1" fill="#505050"/><rect x="5" y="217.0" width="5" height="1" fill="#505050"/><rect x="6" y="228.0" width="2" height="1" fill="#505050"/><rect x="6" y="239.0" width="2" height="1" fill="#505050"/><rect x="6" y="250.0" width="2" height="1" fill="#505050"/><text transform="translate(6.5 260.3) rotate(-90)" font-family="Liberation Sans" font-size="10" fill="#444" text-anchor="middle" y="3.5">2</text><rect x="6" y="271.0" width="2" height="1" fill="#505050"/><rect x="6" y="282.0" width="2" height="1" fill="#505050"/><rect x="6" y="293.0" width="2" height="1" fill="#505050"/><rect x="5" y="303.0" width="5" height="1" fill="#505050"/><rect x="6" y="314.0" width="2" height="1" fill="#505050"/><rect x="6" y="325.0" width="2" height="1" fill="#505050"/><rect x="6" y="336.0" width="2" height="1" fill="#505050"/><text transform="translate(6.5 346.3) rotate(-90)" font-family="Liberation Sans" font-size="10" fill="#444" text-anchor="middle" y="3.5">3</text><rect x="6" y="357.0" width="2" height="1" fill="#505050"/><rect x="6" y="368.0" width="2" height="1" fill="#505050"/><rect x="6" y="379.0" width="2" height="1" fill="#505050"/><rect x="5" y="389.0" width="5" height="1" fill="#505050"/><rect x="6" y="400.0" width="2" height="1" fill="#505050"/><rect x="6" y="411.0" width="2" height="1" fill="#505050"/><rect x="6" y="422.0" width="2" height="1" fill="#505050"/><text transform="translate(6.5 432.3) rotate(-90)" font-family="Liberation Sans" font-size="10" fill="#444" text-anchor="middle" y="3.5">4</text><rect x="6" y="443.0" width="2" height="1" fill="#505050"/><rect x="6" y="454.0" width="2" height="1" fill="#505050"/><rect x="6" y="465.0" width="2" height="1" fill="#505050"/><rect x="5" y="475.0" width="5" height="1" fill="#505050"/><rect x="6" y="486.0" width="2" height="1" fill="#505050"/><rect x="6" y="497.0" width="2" height="1" fill="#505050"/></svg>
<div class="a" style="left:230px;top:288px;width:1px;height:14px;background:#000"></div>
<svg class="a" style="left:873px;top:428px;" width="15" height="22" viewBox="0 0 15 22"><path d="M1.5 1.5V17.5L5 14.2L7.5 19.8L10 18.8L7.6 13.3H12.6Z" fill="#fff" stroke="#111" stroke-width="1.1" stroke-linejoin="round"/></svg>
<div class="t" style="left:8.5px;top:712.19px;font-size:11px;color:#444;font-weight:normal;">Page 1 of 1</div>
<div class="t" style="left:85px;top:712.19px;font-size:11px;color:#444;font-weight:normal;">0 words</div>
<svg class="a" style="left:144px;top:708px;" width="17" height="15" viewBox="0 0 17 15"><path d="M1.5 1.5h5.5l1.5 1.5 1.5-1.5h5.5v11h-5.5l-1.5 1.5-1.5-1.5h-5.5z" fill="none" stroke="#444" stroke-width="1"/><path d="M8.5 3v11" stroke="#444" stroke-width="1"/><path d="M9.5 10l2 2 4-4" fill="none" stroke="#444" stroke-width="1.1"/></svg>
<svg class="a" style="left:178px;top:708px;" width="18" height="15" viewBox="0 0 18 15"><rect x="1.5" y="1.5" width="12" height="11" fill="none" stroke="#444" stroke-width="1"/><path d="M1.5 4h12M4 6.5h3M4 9h3" stroke="#444" stroke-width="1"/><circle cx="12.5" cy="10.5" r="3.5" fill="#f3f2f1" stroke="#444" stroke-width="1"/><circle cx="12.5" cy="10.5" r="1.5" fill="#444"/></svg>
<svg class="a" style="left:211px;top:707px;" width="18" height="17" viewBox="0 0 18 17"><circle cx="7" cy="2.5" r="1.8" fill="none" stroke="#444" stroke-width="1"/><path d="M1.5 5.5c2 1 9 1 11 0M7 6v5l-3 4.5M7 11l2 2" fill="none" stroke="#444" stroke-width="1"/><path d="M10 13l2 2 4-5" fill="none" stroke="#444" stroke-width="1.1"/></svg>
<div class="t" style="left:230px;top:711.77px;font-size:11.5px;color:#444;font-weight:normal;">Accessibility: Good to go</div>
<svg class="a" style="left:647px;top:708px;" width="15" height="15" viewBox="0 0 15 15"><path d="M1.5 4v-2.5h2.5M11 1.5h2.5v2.5M13.5 11v2.5h-2.5M4 13.5h-2.5v-2.5" fill="none" stroke="#444" stroke-width="1"/><path d="M4.5 3.5h4l2 2v6h-6z" fill="none" stroke="#444" stroke-width="1"/></svg>
<div class="t" style="left:664.5px;top:712.19px;font-size:11px;color:#444;font-weight:normal;">Focus</div>
<svg class="a" style="left:718px;top:708px;" width="16" height="14" viewBox="0 0 16 14"><path d="M1.5 1.5h5.5l1 1 1-1h5.5v10h-5.5l-1 1-1-1h-5.5z" fill="none" stroke="#444" stroke-width="1"/><path d="M8 2.5v9.5M3.5 4.5h2.5M3.5 7h2.5M3.5 9.5h2.5M10 4.5h2.5M10 7h2.5M10 9.5h2.5" stroke="#444" stroke-width="0.9"/></svg>
<div class="a" style="left:746px;top:706px;width:38px;height:22px;background:#d2d0ce"></div>
<svg class="a" style="left:758px;top:708px;" width="14" height="16" viewBox="0 0 14 16"><rect x="1.5" y="1.5" width="11" height="13" fill="none" stroke="#444" stroke-width="1"/><path d="M4 4.5h6M4 7h6M4 9.5h6M4 12h6" stroke="#444" stroke-width="0.9"/></svg>
<svg class="a" style="left:797px;top:707px;" width="18" height="17" viewBox="0 0 18 17"><rect x="1.5" y="1.5" width="11" height="12" fill="none" stroke="#444" stroke-width="1"/><path d="M1.5 4h11M4 6.5h4M4 9h3" stroke="#444" stroke-width="0.9"/><circle cx="11.5" cy="11.5" r="4" fill="#f3f2f1" stroke="#444" stroke-width="1"/><path d="M7.5 11.5h8M11.5 7.5c-2 2.5-2 5.5 0 8M11.5 7.5c2 2.5 2 5.5 0 8" fill="none" stroke="#444" stroke-width="0.8"/></svg>
<div class="a" style="left:832px;top:716px;width:8px;height:1px;background:#444"></div>
<div class="a" style="left:846px;top:716px;width:99px;height:1px;background:#8a8886"></div>
<div class="a" style="left:888px;top:711px;width:5px;height:11px;background:#7a7a7a"></div>
<div class="a" style="left:895px;top:713px;width:1px;height:7px;background:#444"></div>
<svg class="a" style="left:949px;top:711px;" width="11" height="11" viewBox="0 0 11 11"><path d="M5.5 0.5v10M0.5 5.5h10" stroke="#444" stroke-width="1"/></svg>
<div class="t" style="left:971px;top:712.19px;font-size:11px;color:#444;font-weight:normal;">90%</div>
<div class="a" style="left:305px;top:272px;width:386px;height:291px;background:#f0f0f0;border:1px solid #7c7c7c;box-shadow:3px 5px 18px 2px rgba(0,0,0,0.26)"></div>
<div class="a" style="left:306px;top:273px;width:384px;height:30px;background:#fff"></div>
<div class="t" style="left:314px;top:282.33px;font-size:12.6px;color:#000;font-weight:normal;transform:scaleX(0.92);transform-origin:left top;">Record Macro</div>
<div class="t" style="left:619px;top:281.84px;font-size:12px;color:#000;font-weight:normal;">?</div>
<svg class="a" style="left:661px;top:281px;" width="13" height="13" viewBox="0 0 13 13"><path d="M1 1l10.3 10.3M11.3 1L1 11.3" stroke="#000" stroke-width="1"/></svg>
<div class="t" style="left:312px;top:312.43px;font-size:11.3px;color:#000;font-weight:normal;"><span style="text-decoration:underline;text-underline-offset:1.5px;text-decoration-thickness:1px">M</span>acro name:</div>
<div class="a" style="left:312px;top:326px;width:372px;height:20px;background:#fff;border:1px solid #a0a0a0"></div>
<div class="t" style="left:315px;top:330.93px;font-size:11.3px;color:#000;font-weight:normal;">MyTable</div>
<div class="a" style="left:358px;top:329px;width:1px;height:14px;background:#000"></div>
<div class="t" style="left:312px;top:351.43px;font-size:11.3px;color:#000;font-weight:normal;">Assign macro to</div>
<div class="a" style="left:396px;top:356px;width:288px;height:1px;background:#dcdcdc"></div>
<div class="a" style="left:318px;top:361px;width:319px;height:56px;border:3px solid #000;border-radius:5px"></div>
<div class="a" style="left:322px;top:370px;width:43px;height:40px;background:#e1e1e1;border:1px solid #c8c8c8"></div>
<svg class="a" style="left:320px;top:368px;" width="48" height="44" viewBox="0 0 48 44">
<path d="M7 29.5h32M7 37.5h32" stroke="#000" stroke-width="1.3"/>
<rect x="9" y="31" width="17.5" height="5" fill="#000"/><rect x="28" y="31" width="9.5" height="5" fill="#000"/>
<rect x="10.3" y="32" width="2.8" height="3" fill="#eee"/><rect x="14.3" y="32" width="2.8" height="3" fill="#eee"/><rect x="18.3" y="32" width="2.8" height="3" fill="#eee"/><rect x="22.3" y="32" width="2.8" height="3" fill="#eee"/>
<rect x="29.3" y="32" width="2.8" height="3" fill="#eee"/><rect x="33.3" y="32" width="2.8" height="3" fill="#eee"/>
<path d="M9 32.5L26.5 13.5" stroke="#000" stroke-width="3.6"/>
<path d="M9.3 32.9L26.9 13.9" stroke="#e00" stroke-width="1.1"/>
<path d="M8.6 32.1L26.1 13.1" stroke="#fff" stroke-width="1.1"/><path d="M8.6 32.1L26.1 13.1" stroke="#ee0" stroke-width="1.1" stroke-dasharray="1 1"/>
<path d="M18.8 10.8L20.2 8.2H27.8L35.8 16.3L35.2 18.6L31.6 20L27.6 16.2L25.6 13.2L23 11.2L19.6 11.4Z" fill="#000"/>
<path d="M21 9.4H27.2L27 10.3H21.5z" fill="#fff" opacity="0.9"/>
<path d="M26.4 10.2L34.2 16.8L33.6 18.2L31.7 18.7L28.4 15.4L26.2 12.4z" fill="#a4a4a4"/>
<path d="M27.5 10.8L33 15.8" stroke="#d8d8d8" stroke-width="0.8"/>
<path d="M35.2 21l1 1M37 22.8l1 1" stroke="#000" stroke-width="1.2"/></svg>
<div class="t" style="left:375px;top:385.93px;font-size:11.3px;color:#000;font-weight:normal;"><span style="text-decoration:underline;text-underline-offset:1.5px;text-decoration-thickness:1px">B</span>utton</div>
<div class="a" style="left:508px;top:370px;width:43px;height:40px;background:#e1e1e1;border:1px solid #c8c8c8"></div>
<svg class="a" style="left:506px;top:368px;" width="48" height="44" viewBox="0 0 48 44">
<path d="M9.8 21.5V19.2H31.8V15.2H29.5L28 13.5" fill="none" stroke="#000" stroke-width="1.3"/>
<path d="M10.5 18.7l1.2 1 1.2-1 1.2 1 1.2-1 1.2 1 1.2-1 1.2 1 1.2-1 1.2 1 1.2-1 1.2 1 1.2-1 1.2 1 1.2-1 1.2 1 1.2-1 1.2 1" fill="none" stroke="#000" stroke-width="0.8"/>
<circle cx="27.6" cy="12.6" r="1.3" fill="#000"/><circle cx="27.6" cy="12.6" r="0.6" fill="#ff0"/>
<rect x="7.6" y="21.6" width="30.8" height="16" rx="1.5" fill="#fff" stroke="#000" stroke-width="1.4"/>
<rect x="9.3" y="23.3" width="27.5" height="12.6" fill="#000"/>
<rect x="10.3" y="24.3" width="2" height="1.8" fill="#fff"/><rect x="13.3" y="24.3" width="2" height="1.8" fill="#fff"/><rect x="16.3" y="24.3" width="2" height="1.8" fill="#fff"/><rect x="19.3" y="24.3" width="2" height="1.8" fill="#fff"/><rect x="22.3" y="24.3" width="2" height="1.8" fill="#fff"/><rect x="25.3" y="24.3" width="2" height="1.8" fill="#fff"/><rect x="28.3" y="24.3" width="2" height="1.8" fill="#fff"/><rect x="31.3" y="24.3" width="2" height="1.8" fill="#fff"/><rect x="34.3" y="24.3" width="2" height="1.8" fill="#fff"/><rect x="10.3" y="27.3" width="3.5" height="1.8" fill="#fff"/><rect x="15.0" y="27.3" width="2" height="1.8" fill="#fff"/><rect x="18.0" y="27.3" width="2" height="1.8" fill="#fff"/><rect x="21.0" y="27.3" width="2" height="1.8" fill="#fff"/><rect x="24.0" y="27.3" width="2" height="1.8" fill="#fff"/><rect x="27.0" y="27.3" width="2" height="1.8" fill="#fff"/><rect x="30.0" y="27.3" width="2" height="1.8" fill="#fff"/><rect x="33" y="27.3" width="3" height="1.8" fill="#fff"/><rect x="10.3" y="30.2" width="2" height="1.8" fill="#fff"/><rect x="13.3" y="30.2" width="2" height="1.8" fill="#fff"/><rect x="16.3" y="30.2" width="2" height="1.8" fill="#fff"/><rect x="19.3" y="30.2" width="2" height="1.8" fill="#fff"/><rect x="22.3" y="30.2" width="2" height="1.8" fill="#fff"/><rect x="25.3" y="30.2" width="2" height="1.8" fill="#fff"/><rect x="28.3" y="30.2" width="2" height="1.8" fill="#fff"/><rect x="31.3" y="30.2" width="4.7" height="1.8" fill="#fff"/><rect x="10.3" y="33" width="3.8" height="1.8" fill="#fff"/><rect x="15.3" y="33" width="2" height="1.8" fill="#fff"/><rect x="18.3" y="33" width="10.5" height="1.8" fill="#fff"/><rect x="30" y="33" width="2" height="1.8" fill="#fff"/><rect x="33" y="33" width="3" height="1.8" fill="#fff"/></svg>
<div class="t" style="left:561px;top:385.93px;font-size:11.3px;color:#000;font-weight:normal;"><span style="text-decoration:underline;text-underline-offset:1.5px;text-decoration-thickness:1px">K</span>eyboard</div>
<div class="t" style="left:312px;top:421.43px;font-size:11.3px;color:#000;font-weight:normal;"><span style="text-decoration:underline;text-underline-offset:1.5px;text-decoration-thickness:1px">S</span>tore macro in:</div>
<div class="a" style="left:312px;top:435px;width:372px;height:22px;background:#fff;border:1px solid #a0a0a0"></div>
<div class="a" style="left:666px;top:436px;width:17px;height:20px;background:#e5e5e5;border-left:1px solid #c8c8c8"></div>
<svg class="a" style="left:669px;top:442px;" width="11" height="7" viewBox="0 0 11 7"><path d="M1 1l4.5 4.5L10 1" fill="none" stroke="#555" stroke-width="1.1"/></svg>
<div class="t" style="left:316px;top:441.43px;font-size:11.3px;color:#000;font-weight:normal;">All Documents (Normal.dotm)</div>
<div class="t" style="left:312px;top:462.43px;font-size:11.3px;color:#000;font-weight:normal;"><span style="text-decoration:underline;text-underline-offset:1.5px;text-decoration-thickness:1px">D</span>escription:</div>
<div class="a" style="left:312px;top:476px;width:372px;height:45px;background:#fff;border:1px solid #a0a0a0"></div>
<div class="a" style="left:525px;top:532px;width:74px;height:22px;background:#e1e1e1;border:2px solid #0078d7"></div>
<div class="t" style="left:412px;width:300px;text-align:center;top:538.13px;font-size:11.3px;color:#000;font-weight:normal;">OK</div>
<div class="a" style="left:609px;top:532px;width:74px;height:22px;background:#e1e1e1;border:1px solid #adadad"></div>
<div class="t" style="left:496px;width:300px;text-align:center;top:538.13px;font-size:11.3px;color:#000;font-weight:normal;">Cancel</div>
<svg class="a" style="left:0px;top:0px;" width="1012" height="728" viewBox="0 0 1012 728"><path d="M110.4 240.6L294.8 332.6" stroke="#000" stroke-width="3.2"/><path d="M305.5 338.0L287.5 336.0L295.7 333.1L293.1 324.9z" fill="#000"/><path d="M822.8 256.2L651.0 383.2" stroke="#000" stroke-width="3.2"/><path d="M641.4 390.3L651.4 375.2L650.2 383.8L658.8 385.2z" fill="#000"/><path d="M171.7 524.0L299.5 453.2" stroke="#000" stroke-width="3.2"/><path d="M310.0 447.4L298.1 461.1L300.4 452.7L292.1 450.2z" fill="#000"/></svg>
<div class="t" style="left:36px;top:213.41px;font-size:25.5px;color:#000;font-weight:bold;">Macro name</div>
<div class="t" style="left:687px;top:195.11px;font-size:25.5px;color:#000;font-weight:bold;">Select option to assign</div>
<div class="t" style="left:789px;top:228.11px;font-size:25.5px;color:#000;font-weight:bold;">macro</div>
<div class="t" style="left:68px;top:522.01px;font-size:25.5px;color:#000;font-weight:bold;">Store macro in</div>
</body></html>
